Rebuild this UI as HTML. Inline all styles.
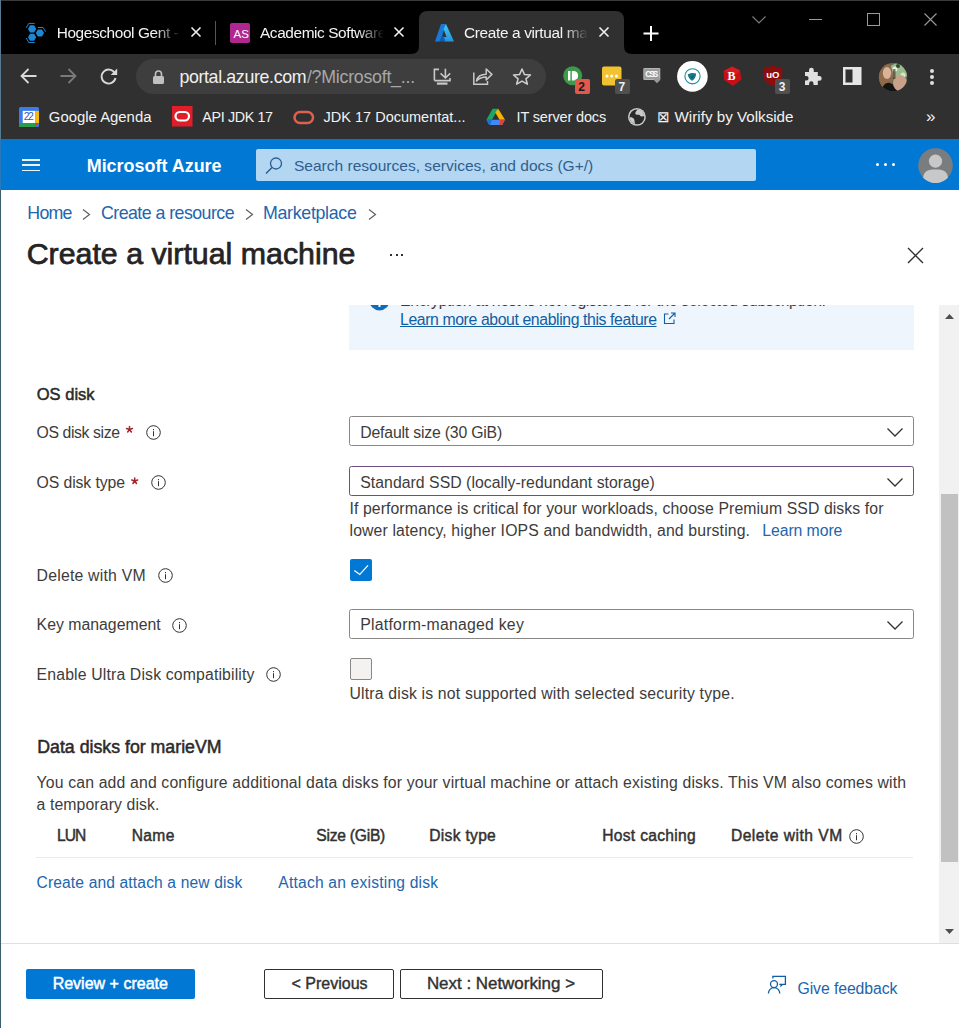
<!DOCTYPE html><html><head><meta charset="utf-8"><style>
html,body{margin:0;padding:0;width:959px;height:1028px;overflow:hidden;background:#fff}
.t{position:absolute;white-space:nowrap;font-family:"Liberation Sans",sans-serif}
.r{position:absolute}
svg.r{overflow:visible}
.fade{-webkit-mask-image:linear-gradient(90deg,#000 0,#000 98px,transparent 124px);width:140px;overflow:hidden}
.fade2{-webkit-mask-image:linear-gradient(90deg,#000 0,#000 100px,transparent 124px);width:130px;overflow:hidden}
</style></head><body>
<div class="r" style="left:0px;top:0px;width:959px;height:54px;background:#000"></div>
<div class="r" style="left:0px;top:0px;width:959px;height:1px;background:#3a3a3a"></div>
<div class="r" style="left:0px;top:54px;width:959px;height:85px;background:#303030"></div>
<div class="r" style="left:419px;top:11px;width:205px;height:44px;background:#303030;border-radius:8px 8px 0 0"></div>
<svg class="r" style="left:411px;top:46px;" width="8" height="8" viewBox="0 0 8 8"><path d="M0 8 Q8 8 8 0 L8 8Z" fill="#303030"/></svg>
<svg class="r" style="left:624px;top:46px;" width="8" height="8" viewBox="0 0 8 8"><path d="M8 8 Q0 8 0 0 L0 8Z" fill="#303030"/></svg>
<svg class="r" style="left:25px;top:22px;" width="22" height="22" viewBox="0 0 22 22"><path d="M11.20 6.90 L9.15 10.45 L5.05 10.45 L3.00 6.90 L5.05 3.35 L9.15 3.35Z" fill="#1f88d4"/><path d="M19.00 11.00 L16.95 14.55 L12.85 14.55 L10.80 11.00 L12.85 7.45 L16.95 7.45Z" fill="#1f88d4"/><path d="M11.20 15.20 L9.15 18.75 L5.05 18.75 L3.00 15.20 L5.05 11.65 L9.15 11.65Z" fill="#1f88d4"/><path d="M1.25 5.8 L3.75 1.4 H9.7" stroke="#1f88d4" stroke-width="1" fill="none"/><path d="M12.8 5.5 H18.1 L20.6 9.6" stroke="#1f88d4" stroke-width="1" fill="none"/><path d="M1.25 16 L3.75 20.5 H9.7" stroke="#1f88d4" stroke-width="1" fill="none"/></svg>
<div class="t fade" style="left:56.70px;top:24px;font-size:15.40px;line-height:17px;color:#f4f4f4;letter-spacing:-0.384px;">Hogeschool Gent -</div>
<svg class="r" style="left:191px;top:27px;" width="10" height="10" viewBox="0 0 10 10"><path d="M0.5 0.5 L9.5 9.5 M9.5 0.5 L0.5 9.5" stroke="#f0f0f0" stroke-width="1.6"/></svg>
<div class="r" style="left:215px;top:21px;width:1px;height:24px;background:#555"></div>
<div class="r" style="left:230px;top:23px;width:20px;height:20px;background:#b0288f;border-radius:2px"></div>
<div class="t" style="left:233.50px;top:28px;font-size:11.50px;line-height:12px;color:#fff;">AS</div>
<div class="t fade" style="left:260.00px;top:24px;font-size:15.40px;line-height:17px;color:#f4f4f4;letter-spacing:-0.400px;">Academic Software</div>
<svg class="r" style="left:394px;top:27px;" width="10" height="10" viewBox="0 0 10 10"><path d="M0.5 0.5 L9.5 9.5 M9.5 0.5 L0.5 9.5" stroke="#f0f0f0" stroke-width="1.6"/></svg>
<svg class="r" style="left:435px;top:24px;" width="19" height="18" viewBox="0 0 19 18"><defs><linearGradient id="az1" x1="0" y1="0" x2="0" y2="1"><stop offset="0" stop-color="#114a8b"/><stop offset="1" stop-color="#0669bc"/></linearGradient><linearGradient id="az2" x1="0" y1="0" x2="0" y2="1"><stop offset="0" stop-color="#3ccbf4"/><stop offset="1" stop-color="#2892df"/></linearGradient></defs><path d="M6 0 H11 L5.2 17.5 H0 Z" fill="#1b78d6"/><path d="M11 0 L19 17.5 H9 L7 13 H11.5 L8.5 5 Z" fill="url(#az2)"/><path d="M8 11 L10.5 17.5 H4 Z" fill="#0a5fb4"/></svg>
<div class="t fade2" style="left:464.00px;top:24px;font-size:15.40px;line-height:17px;color:#f4f4f4;letter-spacing:-0.349px;">Create a virtual machine</div>
<svg class="r" style="left:599px;top:27px;" width="10" height="10" viewBox="0 0 10 10"><path d="M0.5 0.5 L9.5 9.5 M9.5 0.5 L0.5 9.5" stroke="#f0f0f0" stroke-width="1.6"/></svg>
<svg class="r" style="left:643px;top:26px;" width="16" height="15" viewBox="0 0 16 15"><path d="M8 0 V15 M0.5 7.5 H15.5" stroke="#fff" stroke-width="2"/></svg>
<svg class="r" style="left:752px;top:16px;" width="14" height="8" viewBox="0 0 14 8"><path d="M0.5 0.5 L7 7 L13.5 0.5" stroke="#7e7e7e"stroke-width="1.1" fill="none"/></svg>
<div class="r" style="left:809px;top:19px;width:13px;height:1px;background:#9a9a9a"></div>
<div class="r" style="left:867px;top:13px;width:13px;height:13px;border:1px solid #9a9a9a;box-sizing:border-box"></div>
<svg class="r" style="left:924px;top:13px;" width="13" height="13" viewBox="0 0 13 13"><path d="M0.5 0.5 L12.5 12.5 M12.5 0.5 L0.5 12.5" stroke="#9a9a9a" stroke-width="1.1"/></svg>
<svg class="r" style="left:20px;top:68px;" width="17" height="16" viewBox="0 0 17 16"><path d="M16.5 8 H2 M8.5 1 L1.5 8 L8.5 15" stroke="#d8d8d8" stroke-width="1.8" fill="none"/></svg>
<svg class="r" style="left:60px;top:68px;" width="17" height="16" viewBox="0 0 17 16"><path d="M0.5 8 H15 M8.5 1 L15.5 8 L8.5 15" stroke="#7a7a7a" stroke-width="1.8" fill="none"/></svg>
<svg class="r" style="left:100px;top:68px;" width="18" height="16" viewBox="0 0 18 16"><path d="M14.8 5.2 A7 7 0 1 0 15.5 10" stroke="#d8d8d8" stroke-width="1.9" fill="none"/><path d="M17.2 0.5 V7 H10.7 Z" fill="#d8d8d8"/></svg>
<div class="r" style="left:136px;top:59px;width:410px;height:35px;background:#3e3e3e;border-radius:18px"></div>
<svg class="r" style="left:153px;top:70px;" width="11" height="14" viewBox="0 0 11 14"><path d="M2.5 6 V4 A3 3 0 0 1 8.5 4 V6" stroke="#c0c0c0" stroke-width="1.6" fill="none"/><rect x="0" y="6" width="11" height="8" rx="1.5" fill="#c0c0c0"/></svg>
<div class="t" style="left:179.40px;top:67px;font-size:17.80px;line-height:20px;color:#f0f0f0;letter-spacing:-0.354px;">portal.azure.com</div>
<div class="t" style="left:306.90px;top:67px;font-size:17.80px;line-height:20px;color:#a8a8a8;letter-spacing:-0.249px;">/?Microsoft_...</div>
<svg class="r" style="left:433px;top:68px;" width="20" height="18" viewBox="0 0 20 18"><path d="M1.4 12.6 V1.4 H6 M1.4 12.6 H17 V10" stroke="#c8c8c8" stroke-width="1.6" fill="none"/><path d="M12.4 0.8 V9.5 M7.6 5.4 L12.4 10 L17.2 5.4" stroke="#c8c8c8" stroke-width="1.6" fill="none"/><rect x="3.9" y="14.5" width="10.6" height="2.2" fill="#c8c8c8"/></svg>
<svg class="r" style="left:473px;top:67px;" width="20" height="18" viewBox="0 0 20 18"><path d="M0.8 5.5 V17.3 H14.5 V14" stroke="#c8c8c8" stroke-width="1.5" fill="none"/><path d="M3.5 14 C4.5 9.5 8 7.3 13.2 7.3 V2 L18.9 7.4 L13.2 13 V10 C9 10 6 11.5 3.5 14Z" stroke="#c8c8c8" stroke-width="1.5" fill="none" stroke-linejoin="round"/></svg>
<svg class="r" style="left:512px;top:68px;" width="20" height="17" viewBox="0 0 20 17"><path d="M10 1 L12.5 6.6 L18.5 7 L13.9 10.8 L15.4 16.2 L10 13.1 L4.6 16.2 L6.1 10.8 L1.5 7 L7.5 6.6 Z" stroke="#d0d0d0" stroke-width="1.5" fill="none" stroke-linejoin="round"/></svg>
<svg class="r" style="left:563px;top:66px;" width="28" height="28" viewBox="0 0 28 28"><circle cx="9.7" cy="9.7" r="9.5" fill="#3d9a49"/><rect x="5" y="5" width="2.4" height="9.5" fill="#fff"/><path d="M8.8 5 H11 A4.8 4.8 0 0 1 11 14.5 H8.8Z" fill="#fff"/><rect x="12" y="13" width="15" height="15" rx="2" fill="#e2584a"/></svg>
<div class="t" style="left:578.30px;top:80px;font-size:12.00px;line-height:14px;color:#1a1a1a;font-weight:bold;">2</div>
<svg class="r" style="left:602px;top:66px;" width="29" height="28" viewBox="0 0 29 28"><rect x="0" y="0.5" width="19.5" height="19" rx="2" fill="#f2c230"/><circle cx="5" cy="10" r="1.5" fill="#fff"/><circle cx="9.7" cy="10" r="1.5" fill="#fff"/><circle cx="14.4" cy="10" r="1.5" fill="#fff"/><rect x="13" y="13" width="15" height="15" rx="2" fill="#505050"/></svg>
<div class="t" style="left:618.50px;top:80px;font-size:12.00px;line-height:14px;color:#f0f0f0;font-weight:bold;">7</div>
<svg class="r" style="left:643px;top:68px;" width="19" height="16" viewBox="0 0 19 16"><rect x="0.3" y="0" width="17" height="12" rx="1" fill="#b4b4b4"/><rect x="1.3" y="1" width="15" height="10" fill="#9c9c9c"/><path d="M14 8.3 L17.5 11.8 L14 15.3 L10.5 11.8Z" fill="#9a9a9a"/></svg>
<div class="t" style="left:645.30px;top:70px;font-size:8.20px;line-height:9px;color:#fdfdfd;font-weight:bold;letter-spacing:-1.946px;">CSS</div>
<svg class="r" style="left:677px;top:61px;" width="31" height="31" viewBox="0 0 31 31"><circle cx="15.4" cy="15.4" r="15.3" fill="#fff"/><circle cx="15.5" cy="15.3" r="7.6" fill="none" stroke="#1b8a9a" stroke-width="1.1"/><path d="M10.7 13.6 C12.5 12 16.5 11.6 19 12.6 C19.2 15.5 17.5 18.8 15 19.8 C13 18.8 11.2 16.3 10.7 13.6Z" fill="#19788a"/><path d="M13.8 15.8 L15 17 L16.8 14.6" stroke="#0d4550" stroke-width="0.8" fill="none"/></svg>
<svg class="r" style="left:723px;top:66px;" width="20" height="21" viewBox="0 0 20 21"><path d="M9 0.5 L17 4.3 L18.5 13.5 L10 20 L1.3 14 L0.5 5 Z" fill="#c80f15"/><path d="M9 0.5 L17 4.3 L14 8 L5 6 L0.5 5Z" fill="#e0232a" opacity="0.6"/></svg>
<div class="t" style="left:727.50px;top:69px;font-size:12.00px;line-height:14px;color:#fff;font-weight:bold;font-family:'Liberation Serif',serif;">B</div>
<svg class="r" style="left:763px;top:65px;" width="28" height="29" viewBox="0 0 28 29"><path d="M9.7 0.5 C13 2 16 2.8 19.3 2.8 V10 C19.3 15 15 19 9.7 21 C4.4 19 0.1 15 0.1 10 V2.8 C3.4 2.8 6.4 2 9.7 0.5Z" fill="#8b0d0d"/><rect x="12" y="14" width="15" height="15" rx="2" fill="#505050"/></svg>
<div class="t" style="left:766.20px;top:69px;font-size:9.50px;line-height:11px;color:#fff;font-weight:bold;">uO</div>
<div class="t" style="left:778.80px;top:80px;font-size:12.00px;line-height:14px;color:#f0f0f0;font-weight:bold;">3</div>
<svg class="r" style="left:803px;top:67px;" width="19" height="18" viewBox="0 0 19 18"><path d="M2 5 H6 V3.2 A2.4 2.4 0 0 1 10.8 3.2 V5 H14.8 V9 H16.3 A2.4 2.4 0 0 1 16.3 13.8 H14.8 V18 H10.5 V16.5 A2.2 2.2 0 0 0 6.1 16.5 V18 H2 V13.5 H3.3 A2.3 2.3 0 0 0 3.3 8.9 H2 Z" fill="#e0e0e0"/></svg>
<svg class="r" style="left:843px;top:67px;" width="19" height="18" viewBox="0 0 19 18"><rect x="0" y="0" width="18.5" height="18" fill="#e6e6e6"/><rect x="2.5" y="2.5" width="7" height="13" fill="#303030"/></svg>
<svg class="r" style="left:878px;top:63px;" width="30" height="28" viewBox="0 0 30 28"><defs><clipPath id="avc"><circle cx="15" cy="14.2" r="14.2"/></clipPath></defs><g clip-path="url(#avc)"><rect x="0" y="0" width="30" height="30" fill="#5f6f52"/><ellipse cx="21" cy="8" rx="10" ry="8" fill="#9cba8e"/><circle cx="17" cy="6" r="2.5" fill="#e8f0e0"/><circle cx="25" cy="12" r="2.5" fill="#d8e6cf"/><circle cx="20" cy="3" r="2" fill="#2f4a2a"/><ellipse cx="8" cy="13" rx="7" ry="13" fill="#8e6a4a"/><ellipse cx="9" cy="10" rx="4.2" ry="6" fill="#d8b39a"/><path d="M3 30 C4 22 8 19 12 20 C15 21 18 24 20 30Z" fill="#141414"/><ellipse cx="22" cy="20" rx="7" ry="8" fill="#c9a08a"/><rect x="15" y="6" width="2.5" height="10" fill="#3a2a1c" opacity="0.6"/></g></svg>
<div class="r" style="left:930px;top:69px;width:4px;height:4px;background:#e0e0e0;border-radius:2px"></div>
<div class="r" style="left:930px;top:75px;width:4px;height:4px;background:#e0e0e0;border-radius:2px"></div>
<div class="r" style="left:930px;top:81px;width:4px;height:4px;background:#e0e0e0;border-radius:2px"></div>
<svg class="r" style="left:19px;top:107px;" width="20" height="20" viewBox="0 0 20 20"><rect x="0" y="0" width="20" height="20" rx="1.5" fill="#3b7cea"/><rect x="3.75" y="3.9" width="12.5" height="12.2" fill="#fff"/><rect x="16.25" y="3.9" width="3.75" height="12.2" fill="#f6b80e"/><path d="M0 16.1 H16.25 V20 H1.5 A1.5 1.5 0 0 1 0 18.5Z" fill="#2a9d4a"/><path d="M16.25 16.1 H20 L16.25 20Z" fill="#d93a2c"/></svg>
<div class="t" style="left:23.80px;top:110px;font-size:10.50px;line-height:12px;color:#2e5cb8;letter-spacing:-1.655px;">22</div>
<div class="t" style="left:48.80px;top:109px;font-size:14.90px;line-height:16px;color:#f2f2f2;">Google Agenda</div>
<svg class="r" style="left:172px;top:106px;" width="21" height="21" viewBox="0 0 21 21"><rect x="0" y="0" width="20.5" height="20.5" fill="#e01e2a"/><rect x="3.5" y="6" width="13.5" height="8.5" rx="4.25" fill="none" stroke="#fff" stroke-width="2.2"/></svg>
<div class="t" style="left:202.30px;top:109px;font-size:14.30px;line-height:16px;color:#f2f2f2;letter-spacing:-0.359px;">API JDK 17</div>
<svg class="r" style="left:293px;top:109.5px;" width="22" height="16" viewBox="0 0 22 16"><rect x="1.5" y="2" width="18.5" height="11" rx="5.5" fill="none" stroke="#e0604f" stroke-width="2.5"/></svg>
<div class="t" style="left:323.60px;top:109px;font-size:14.51px;line-height:16px;color:#f2f2f2;">JDK 17 Documentat...</div>
<svg class="r" style="left:486px;top:108px;" width="20" height="18" viewBox="0 0 20 18"><path d="M6.6 0.7 H12.2 L6 11.8 H0.4 Z" fill="#1fa463"/><path d="M12.2 0.7 L19 11.8 H13.5 L9.3 4.6 Z" fill="#f7b400"/><path d="M0.4 11.8 H19 L16.2 16.9 H3.3 Z" fill="#4587f4"/><path d="M14 11.8 H19 L16.2 16.9 H13.3 Z" fill="#dc4437"/><path d="M0.4 11.8 H6 L4.4 16.9 H3.3 Z" fill="#1e6fd9"/></svg>
<div class="t" style="left:516.50px;top:109px;font-size:14.50px;line-height:16px;color:#f2f2f2;letter-spacing:-0.149px;">IT server docs</div>
<svg class="r" style="left:627px;top:107px;" width="20" height="20" viewBox="0 0 20 20"><circle cx="9.9" cy="9.9" r="8.9" fill="#c9cacc"/><circle cx="9.9" cy="9.9" r="7.4" fill="#2a2a2a"/><path d="M10.5 2.4 C9.5 4 7.5 5.5 8.5 7 C10 8.5 12 7 13 8.5 C14 10 16 9.5 17.2 9 A7.4 7.4 0 0 0 10.5 2.4Z" fill="#c9cacc"/><path d="M2.6 10.5 C4 10 6 10.5 7 12 C8 13.5 7 15 8.5 17.2 A7.4 7.4 0 0 1 2.6 10.5Z" fill="#c9cacc"/></svg>
<div class="t" style="left:657.30px;top:108px;font-size:15.20px;line-height:17px;color:#f2f2f2;">⊠ Wirify by Volkside</div>
<div class="t" style="left:926.00px;top:107px;font-size:17.00px;line-height:19px;color:#f2f2f2;">»</div>
<div class="r" style="left:1px;top:139px;width:958px;height:51px;background:#0078d4"></div>
<div class="r" style="left:22px;top:159.3px;width:18px;height:1.4px;background:#eaf4fc"></div>
<div class="r" style="left:22px;top:164.4px;width:18px;height:1.4px;background:#eaf4fc"></div>
<div class="r" style="left:22px;top:169.5px;width:18px;height:1.4px;background:#eaf4fc"></div>
<div class="t" style="left:86.70px;top:156px;font-size:17.95px;line-height:20px;color:#fff;font-weight:bold;">Microsoft Azure</div>
<div class="r" style="left:256px;top:149px;width:500px;height:32px;background:#b3d6f2;border-radius:2px"></div>
<svg class="r" style="left:265px;top:157px;" width="18" height="17" viewBox="0 0 18 17"><circle cx="11" cy="6.5" r="5.5" fill="none" stroke="#2b5d8f" stroke-width="1.3"/><path d="M7 10.5 L1 16.5" stroke="#2b5d8f" stroke-width="1.5"/></svg>
<div class="t" style="left:293.90px;top:157px;font-size:15.56px;line-height:17px;color:#2f5f8f;">Search resources, services, and docs (G+/)</div>
<div class="r" style="left:876px;top:163px;width:3px;height:3px;background:#fff;border-radius:1.5px"></div>
<div class="r" style="left:884px;top:163px;width:3px;height:3px;background:#fff;border-radius:1.5px"></div>
<div class="r" style="left:892px;top:163px;width:3px;height:3px;background:#fff;border-radius:1.5px"></div>
<svg class="r" style="left:918px;top:148px;" width="35" height="35" viewBox="0 0 35 35"><circle cx="17.5" cy="17.5" r="17.3" fill="#7a7d80"/><circle cx="17.5" cy="13.2" r="6.6" fill="#c8c8c8"/><path d="M5 29.5 C6 23 10 21.5 17.5 21.5 C25 21.5 29 23 30 29.5 C27 33 22 35 17.5 35 C13 35 8 33 5 29.5Z" fill="#c8c8c8"/></svg>
<div class="t" style="left:27.30px;top:203px;font-size:17.80px;line-height:20px;color:#2166ad;letter-spacing:-0.742px;">Home</div>
<svg class="r" style="left:82px;top:209px;" width="9" height="11" viewBox="0 0 9 11"><path d="M1 0.5 L7.5 5.5 L1 10.5" stroke="#605e5c" stroke-width="1.2" fill="none"/></svg>
<div class="t" style="left:101.00px;top:203px;font-size:17.80px;line-height:20px;color:#2166ad;letter-spacing:-0.550px;">Create a resource</div>
<svg class="r" style="left:245px;top:209px;" width="9" height="11" viewBox="0 0 9 11"><path d="M1 0.5 L7.5 5.5 L1 10.5" stroke="#605e5c" stroke-width="1.2" fill="none"/></svg>
<div class="t" style="left:263.00px;top:203px;font-size:17.80px;line-height:20px;color:#2166ad;letter-spacing:-0.301px;">Marketplace</div>
<svg class="r" style="left:368px;top:209px;" width="9" height="11" viewBox="0 0 9 11"><path d="M1 0.5 L7.5 5.5 L1 10.5" stroke="#605e5c" stroke-width="1.2" fill="none"/></svg>
<div class="t" style="left:26.68px;top:237px;font-size:30.33px;line-height:33px;color:#242424;-webkit-text-stroke:0.75px #242424;">Create a virtual machine</div>
<div class="r" style="left:390px;top:254px;width:2px;height:2px;background:#323130"></div>
<div class="r" style="left:396px;top:254px;width:2px;height:2px;background:#323130"></div>
<div class="r" style="left:401px;top:254px;width:2px;height:2px;background:#323130"></div>
<svg class="r" style="left:907px;top:247px;" width="17" height="17" viewBox="0 0 17 17"><path d="M1 1 L16 16 M16 1 L1 16" stroke="#323130" stroke-width="1.4"/></svg>
<div class="r" style="left:0;top:0;width:959px;height:1028px;clip-path:inset(305px 0 85px 0)">
<div class="r" style="left:349px;top:285px;width:565px;height:65px;background:#eef5fd"></div>
<svg class="r" style="left:369px;top:290px;" width="21" height="21" viewBox="0 0 21 21"><circle cx="10.5" cy="10.5" r="10" fill="#0f6cbd"/><rect x="9.5" y="9" width="2" height="8" fill="#fff"/></svg>
<div class="t" style="left:400.00px;top:292px;font-size:15.80px;line-height:17px;color:#3d3c3b;transform:translateY(-0.5px);letter-spacing:-0.344px;">Encryption at host is not registered for the selected subscription.</div>
<div class="t" style="left:400.00px;top:311px;font-size:15.80px;line-height:17px;color:#115ea3;text-decoration:underline;letter-spacing:-0.390px;">Learn more about enabling this feature</div>
<svg class="r" style="left:663px;top:312px;" width="13" height="13" viewBox="0 0 13 13"><path d="M5.5 2 H1.5 V11.5 H11 V7.5 M8 1 H12 V5 M12 1 L6 7" stroke="#115ea3" stroke-width="1.1" fill="none"/></svg>
<div class="t" style="left:36.75px;top:385px;font-size:16.52px;line-height:19px;color:#2b2a29;-webkit-text-stroke:0.5px #2b2a29;">OS disk</div>
<div class="t" style="left:36.50px;top:424px;font-size:15.80px;line-height:17px;color:#3d3c3b;letter-spacing:-0.395px;">OS disk size</div>
<svg class="r" style="left:0;top:0" width="1" height="1"><path d="M129.50 429.50 L129.50 426.40 M129.50 429.50 L132.45 428.54 M129.50 429.50 L131.32 432.01 M129.50 429.50 L127.68 432.01 M129.50 429.50 L126.55 428.54 " stroke="#a4262c" stroke-width="1.5" stroke-linecap="round"/></svg>
<svg class="r" style="left:145.5px;top:425.0px;" width="15" height="15" viewBox="0 0 15 15"><circle cx="7.5" cy="7.5" r="6.8" fill="none" stroke="#323130" stroke-width="1"/><rect x="7" y="6.2" width="1" height="5" fill="#323130"/><rect x="7" y="4" width="1" height="1.2" fill="#323130"/></svg>
<div class="r" style="left:349px;top:416px;width:565px;height:30px;border:1px solid #8a8886;border-radius:2.5px;box-sizing:border-box"></div>
<div class="t" style="left:360.30px;top:424px;font-size:15.80px;line-height:17px;color:#3d3c3b;letter-spacing:-0.192px;">Default size (30 GiB)</div>
<svg class="r" style="left:887px;top:428px;" width="16" height="9" viewBox="0 0 16 9"><path d="M0.5 0.5 L8 8 L15.5 0.5" stroke="#323130" stroke-width="1.3" fill="none"/></svg>
<div class="t" style="left:36.60px;top:474px;font-size:15.80px;line-height:17px;color:#3d3c3b;letter-spacing:-0.108px;">OS disk type</div>
<svg class="r" style="left:0;top:0" width="1" height="1"><path d="M134.70 481.00 L134.70 477.90 M134.70 481.00 L137.65 480.04 M134.70 481.00 L136.52 483.51 M134.70 481.00 L132.88 483.51 M134.70 481.00 L131.75 480.04 " stroke="#a4262c" stroke-width="1.5" stroke-linecap="round"/></svg>
<svg class="r" style="left:150.9px;top:475.0px;" width="15" height="15" viewBox="0 0 15 15"><circle cx="7.5" cy="7.5" r="6.8" fill="none" stroke="#323130" stroke-width="1"/><rect x="7" y="6.2" width="1" height="5" fill="#323130"/><rect x="7" y="4" width="1" height="1.2" fill="#323130"/></svg>
<div class="r" style="left:349px;top:466px;width:565px;height:30px;border:1px solid #6e4f82;border-radius:2.5px;box-sizing:border-box"></div>
<div class="t" style="left:360.30px;top:474px;font-size:15.80px;line-height:17px;color:#3d3c3b;letter-spacing:0.032px;">Standard SSD (locally-redundant storage)</div>
<svg class="r" style="left:887px;top:478px;" width="16" height="9" viewBox="0 0 16 9"><path d="M0.5 0.5 L8 8 L15.5 0.5" stroke="#323130" stroke-width="1.3" fill="none"/></svg>
<div class="t" style="left:349.50px;top:500px;font-size:15.80px;line-height:17px;color:#3d3c3b;letter-spacing:0.085px;">If performance is critical for your workloads, choose Premium SSD disks for</div>
<div class="t" style="left:349.50px;top:522px;font-size:15.80px;line-height:17px;color:#3d3c3b;letter-spacing:0.137px;">lower latency, higher IOPS and bandwidth, and bursting.</div>
<div class="t" style="left:762.30px;top:522px;font-size:15.80px;line-height:17px;color:#2166ad;letter-spacing:-0.082px;">Learn more</div>
<div class="t" style="left:36.60px;top:567px;font-size:15.80px;line-height:17px;color:#3d3c3b;letter-spacing:0.210px;">Delete with VM</div>
<svg class="r" style="left:157.7px;top:567.8px;" width="15" height="15" viewBox="0 0 15 15"><circle cx="7.5" cy="7.5" r="6.8" fill="none" stroke="#323130" stroke-width="1"/><rect x="7" y="6.2" width="1" height="5" fill="#323130"/><rect x="7" y="4" width="1" height="1.2" fill="#323130"/></svg>
<div class="r" style="left:350px;top:559px;width:22px;height:22px;background:#0078d4;border-radius:2px"></div>
<svg class="r" style="left:350px;top:559px;" width="22" height="22" viewBox="0 0 22 22"><path d="M4.3 11.4 L9.8 15.5 L18 6.3" stroke="#fff" stroke-width="1.2" fill="none"/></svg>
<div class="t" style="left:36.60px;top:616px;font-size:15.80px;line-height:17px;color:#3d3c3b;letter-spacing:0.018px;">Key management</div>
<svg class="r" style="left:171.6px;top:617.5px;" width="15" height="15" viewBox="0 0 15 15"><circle cx="7.5" cy="7.5" r="6.8" fill="none" stroke="#323130" stroke-width="1"/><rect x="7" y="6.2" width="1" height="5" fill="#323130"/><rect x="7" y="4" width="1" height="1.2" fill="#323130"/></svg>
<div class="r" style="left:349px;top:609px;width:565px;height:30px;border:1px solid #8a8886;border-radius:2.5px;box-sizing:border-box"></div>
<div class="t" style="left:360.30px;top:616px;font-size:15.80px;line-height:17px;color:#3d3c3b;letter-spacing:0.240px;">Platform-managed key</div>
<svg class="r" style="left:887px;top:621px;" width="16" height="9" viewBox="0 0 16 9"><path d="M0.5 0.5 L8 8 L15.5 0.5" stroke="#323130" stroke-width="1.3" fill="none"/></svg>
<div class="t" style="left:36.60px;top:666px;font-size:15.80px;line-height:17px;color:#3d3c3b;letter-spacing:0.150px;">Enable Ultra Disk compatibility</div>
<svg class="r" style="left:265.8px;top:667.1px;" width="15" height="15" viewBox="0 0 15 15"><circle cx="7.5" cy="7.5" r="6.8" fill="none" stroke="#323130" stroke-width="1"/><rect x="7" y="6.2" width="1" height="5" fill="#323130"/><rect x="7" y="4" width="1" height="1.2" fill="#323130"/></svg>
<div class="r" style="left:350px;top:658px;width:22px;height:22px;background:#f3f2f1;border:1px solid #8a8886;border-radius:2px;box-sizing:border-box"></div>
<div class="t" style="left:349.50px;top:685px;font-size:15.80px;line-height:17px;color:#3d3c3b;letter-spacing:0.168px;">Ultra disk is not supported with selected security type.</div>
<div class="t" style="left:37.25px;top:737px;font-size:17.74px;line-height:20px;color:#2b2a29;-webkit-text-stroke:0.5px #2b2a29;">Data disks for marieVM</div>
<div class="t" style="left:36.50px;top:774px;font-size:15.80px;line-height:17px;color:#3d3c3b;letter-spacing:0.155px;">You can add and configure additional data disks for your virtual machine or attach existing disks. This VM also comes with</div>
<div class="t" style="left:36.50px;top:796px;font-size:15.80px;line-height:17px;color:#3d3c3b;letter-spacing:0.113px;">a temporary disk.</div>
<div class="t" style="left:56.93px;top:827px;font-size:15.60px;line-height:17px;color:#323130;-webkit-text-stroke:0.45px #323130;letter-spacing:-0.925px;">LUN</div>
<div class="t" style="left:131.72px;top:827px;font-size:15.60px;line-height:17px;color:#323130;-webkit-text-stroke:0.45px #323130;letter-spacing:0.333px;">Name</div>
<div class="t" style="left:316.23px;top:827px;font-size:15.60px;line-height:17px;color:#323130;-webkit-text-stroke:0.45px #323130;letter-spacing:-0.221px;">Size (GiB)</div>
<div class="t" style="left:429.23px;top:827px;font-size:15.60px;line-height:17px;color:#323130;-webkit-text-stroke:0.45px #323130;letter-spacing:0.304px;">Disk type</div>
<div class="t" style="left:602.23px;top:827px;font-size:15.60px;line-height:17px;color:#323130;-webkit-text-stroke:0.45px #323130;letter-spacing:0.307px;">Host caching</div>
<div class="t" style="left:730.93px;top:827px;font-size:15.60px;line-height:17px;color:#323130;-webkit-text-stroke:0.45px #323130;letter-spacing:0.494px;">Delete with VM</div>
<svg class="r" style="left:849.1px;top:828.5px;" width="15" height="15" viewBox="0 0 15 15"><circle cx="7.5" cy="7.5" r="6.8" fill="none" stroke="#323130" stroke-width="1"/><rect x="7" y="6.2" width="1" height="5" fill="#323130"/><rect x="7" y="4" width="1" height="1.2" fill="#323130"/></svg>
<div class="r" style="left:36px;top:857px;width:877px;height:1px;background:#edebe9"></div>
<div class="t" style="left:36.50px;top:874px;font-size:15.60px;line-height:17px;color:#2166ad;letter-spacing:0.142px;">Create and attach a new disk</div>
<div class="t" style="left:278.30px;top:874px;font-size:15.60px;line-height:17px;color:#2166ad;letter-spacing:0.210px;">Attach an existing disk</div>
</div>
<div class="r" style="left:939px;top:305px;width:20px;height:638px;background:#f1f1f1"></div>
<svg class="r" style="left:945px;top:314px;" width="9" height="5" viewBox="0 0 9 5"><path d="M0 5 L4.5 0 L9 5Z" fill="#505050"/></svg>
<div class="r" style="left:941px;top:494px;width:17px;height:368px;background:#c1c1c1"></div>
<svg class="r" style="left:945px;top:929px;" width="9" height="5" viewBox="0 0 9 5"><path d="M0 0 L4.5 5 L9 0Z" fill="#505050"/></svg>
<div class="r" style="left:1px;top:943px;width:958px;height:1px;background:#e1dfdd"></div>
<div class="r" style="left:26px;top:969px;width:169px;height:30px;background:#0078d4;border-radius:2px"></div>
<div class="t" style="left:52.65px;top:974px;font-size:16.03px;line-height:18px;color:#fff;-webkit-text-stroke:0.5px #fff;">Review + create</div>
<div class="r" style="left:264px;top:969px;width:130px;height:30px;border:1px solid #323130;border-radius:2px;box-sizing:border-box"></div>
<div class="t" style="left:291.50px;top:975px;font-size:16.00px;line-height:17px;color:#323130;-webkit-text-stroke:0.4px #323130;">&lt; Previous</div>
<div class="r" style="left:400px;top:969px;width:203px;height:30px;border:1px solid #323130;border-radius:2px;box-sizing:border-box"></div>
<div class="t" style="left:426.90px;top:974px;font-size:16.93px;line-height:19px;color:#323130;-webkit-text-stroke:0.4px #323130;">Next : Networking &gt;</div>
<svg class="r" style="left:762px;top:970px;" width="30" height="30" viewBox="0 0 30 30"><path d="M10.9 8.6 V6.4 H23.4 V14.4 H17.3" stroke="#115ea3" stroke-width="1.3" fill="none"/><path d="M18.6 14 L18.2 17.6 L21.8 14Z" fill="#115ea3"/><circle cx="12" cy="14.1" r="3.5" fill="none" stroke="#115ea3" stroke-width="1.3"/><path d="M6.4 23.4 A5.7 5.7 0 0 1 17.8 23.4" stroke="#115ea3" stroke-width="1.3" fill="none"/></svg>
<div class="t" style="left:797.50px;top:980px;font-size:15.80px;line-height:17px;color:#2166ad;letter-spacing:-0.093px;">Give feedback</div>
<div class="r" style="left:0px;top:0px;width:1px;height:139px;background:#557a92"></div>
<div class="r" style="left:0px;top:139px;width:1px;height:51px;background:#2a78b8"></div>
<div class="r" style="left:0px;top:190px;width:1px;height:838px;background:#3a5f70"></div>
</body></html>
